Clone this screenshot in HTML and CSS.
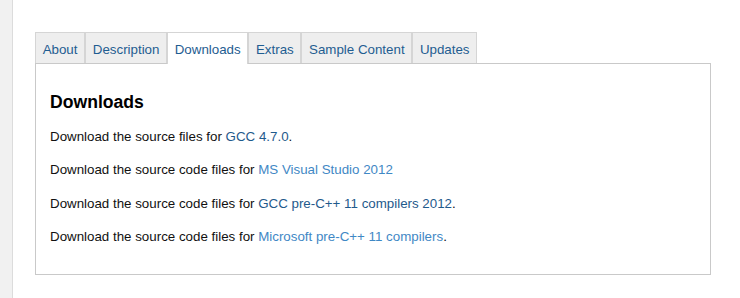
FILE: index.html
```html
<!DOCTYPE html>
<html>
<head>
<meta charset="utf-8">
<link rel="stylesheet" href="styles.css">
</head>
<body>
<div class="page">
  <div class="sidebar"></div>
  <div class="main">
    <div class="tabs">
      <div class="tab">About</div>
      <div class="tab">Description</div>
      <div class="tab active">Downloads</div>
      <div class="tab">Extras</div>
      <div class="tab">Sample Content</div>
      <div class="tab">Updates</div>
    </div>
    <div class="panel">
      <h2 class="title">Downloads</h2>
      <p>Download the source files for <a class="visited" href="#">GCC 4.7.0</a>.</p>
      <p>Download the source code files for <a href="#">MS Visual Studio 2012</a></p>
      <p>Download the source code files for <a class="visited" href="#">GCC pre-C++ 11 compilers 2012</a>.</p>
      <p>Download the source code files for <a href="#">Microsoft pre-C++ 11 compilers</a>.</p>
    </div>
  </div>
</div>
</body>
</html>
```

FILE: styles.css
```css
html, body {
  margin: 0;
  padding: 0;
  background: #ffffff;
}
body {
  font-family: "Liberation Sans", Arial, sans-serif;
  font-size: 13.33px;
  color: #111111;
}
.page {
  display: flex;
  min-height: 298px;
}
.sidebar {
  width: 12px;
  background: #f1f1f1;
  border-right: 1px solid #dcdcdc;
  flex: none;
}
.main {
  padding: 32px 0 0 22px;
  width: 676px;
}
.tabs {
  display: flex;
  position: relative;
  z-index: 1;
}
.tab {
  background: #eeeeee;
  border: 1px solid #d5d5d5;
  border-bottom: 0;
  color: #1f5d91;
  line-height: 20px;
  padding: 7px 6.65px 3px;
}
.tab.active {
  background: #ffffff;
  padding-bottom: 4px;
  margin-bottom: -1px;
}
.panel {
  border: 1px solid #c9c9c9;
  padding: 14px 14px 13px;
  height: 183px;
}
.title {
  font-size: 17.6px;
  font-weight: bold;
  line-height: 20px;
  margin: 14px 0 15px;
  color: #000000;
}
.panel p {
  margin: 13.33px 0;
  line-height: 20px;
}
.panel a {
  color: #3f88c5;
  text-decoration: none;
}
.panel a.visited {
  color: #1f5a8c;
}
```
